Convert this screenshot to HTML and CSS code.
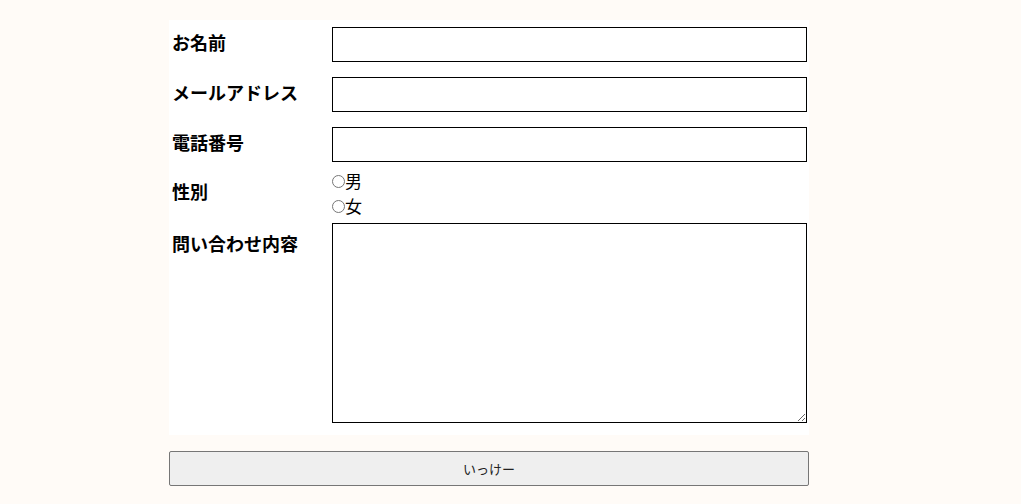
FILE: index.html
```html
<!DOCTYPE html>
<html lang="ja">
    <head>
        <meta charset="UTF-8">
        <title>お問い合わせ</title>
        <link rel="stylesheet" href="styles.css">
    </head>
    <body>
        <form class="contact">
            <div class="panel">
                <div class="row">
                    <label class="label" for="name">お名前</label>
                    <input class="text" type="text" id="name">
                </div>
                <div class="row">
                    <label class="label" for="mail">メールアドレス</label>
                    <input class="text" type="email" id="mail">
                </div>
                <div class="row">
                    <label class="label" for="tel">電話番号</label>
                    <input class="text" type="tel" id="tel">
                </div>
                <div class="row row-radio">
                    <span class="label">性別</span>
                    <div class="choices">
                        <label><input type="radio" name="sex" value="m">男</label>
                        <label><input type="radio" name="sex" value="f">女</label>
                    </div>
                </div>
                <div class="row row-area">
                    <label class="label" for="body">問い合わせ内容</label>
                    <textarea id="body"></textarea>
                </div>
            </div>
            <button class="send" type="submit">いっけー</button>
        </form>
    </body>
</html>
```

FILE: styles.css
```css
*{ margin:0; padding:0; box-sizing:border-box;}
body{
    background: #fffbf7;
    font-family: "Noto Sans CJK JP", "Noto Sans", sans-serif;
    color: #000;
}
.contact{
    width: 640px;
    margin: 20px 0 0 169px;
}
.panel{
    background: #fff;
    padding: 7px 2px 12px 3px;
}
.row{
    display: flex;
    align-items: center;
}
.row + .row{
    margin-top: 15px;
}
.label{
    width: 160px;
    flex: none;
    font-size: 18px;
    font-weight: bold;
    line-height: 25px;
    padding-bottom: 4px;
}
.text{
    width: 475px;
    height: 35px;
    border: 1px solid #000;
    background: #fff;
    font-size: 16px;
    padding: 0 4px;
}
.row.row-radio{
    margin-top: 6px;
}
.choices label{
    display: flex;
    align-items: center;
    height: 25px;
    font-size: 17px;
}
.choices input{
    width: 13px;
    height: 13px;
    margin: 2px 0 0;
}
.row.row-area{
    margin-top: 5px;
    align-items: flex-start;
}
.row-area .label{
    padding-top: 8px;
    padding-bottom: 0;
}
textarea{
    width: 475px;
    height: 200px;
    border: 1px solid #000;
    background: #fff;
}
.send{
    display: block;
    width: 640px;
    height: 35px;
    margin-top: 16px;
    background: #efefef;
    border: 1px solid #767676;
    border-radius: 2px;
    font-family: "Noto Sans CJK JP", sans-serif;
    font-size: 13px;
    color: #222;
}
```
